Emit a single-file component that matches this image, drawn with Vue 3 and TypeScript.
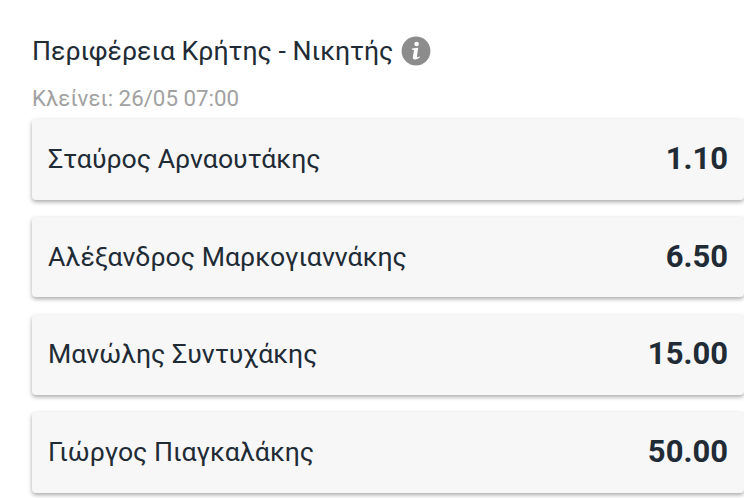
<script setup lang="ts">
interface Outcome { name: string; odds: string }
const outcomes: Outcome[] = [
  { name: 'Σταύρος Αρναουτάκης', odds: '1.10' },
  { name: 'Αλέξανδρος Μαρκογιαννάκης', odds: '6.50' },
  { name: 'Μανώλης Συντυχάκης', odds: '15.00' },
  { name: 'Γιώργος Πιαγκαλάκης', odds: '50.00' },
]
</script>

<template>
  <main class="market">
    <header class="head">
      <h1 class="title">Περιφέρεια Κρήτης - Νικητής</h1>
      <svg class="info" viewBox="0 0 30 30" aria-hidden="true">
        <circle cx="15" cy="15" r="14.4" fill="#8c8c8c" />
        <circle cx="15.6" cy="8" r="2.3" fill="#fff" />
        <path d="M11 12.4 L17.2 11.8 L15.9 20.4 Q15.8 22 18.8 20.3 L18.7 21.6 Q16.2 23.8 13.6 23.6 Q11.4 23.3 11.9 20.7 L13.1 14.2 L10.9 13.6 Z" fill="#fff" />
      </svg>
    </header>
    <p class="closes">Κλείνει: 26/05 07:00</p>
    <div class="list">
      <button v-for="o in outcomes" :key="o.name" class="row">
        <span class="name">{{ o.name }}</span>
        <span class="odds">{{ o.odds }}</span>
      </button>
    </div>
  </main>
</template>

<style>
body { background: #fff; overflow: hidden; }
</style>
<style scoped>
.market { box-sizing: border-box; height: 498px; overflow: hidden; padding: 34px 0 0 32px; font-family: Roboto, sans-serif; color: #212b35; }
.head { display: flex; align-items: center; gap: 8px; height: 34px; }
.title { margin: 0; font-size: 26.67px; line-height: 34px; font-weight: 400; white-space: nowrap; }
.info { flex: none; width: 30px; height: 30px; }
.closes { margin: 17px 0 0; font-size: 22.3px; line-height: 26px; color: #a1a1a1; height: 26px; }
.list { display: flex; flex-direction: column; gap: 17.2px; margin-top: 8px; }
.row { display: flex; align-items: center; justify-content: space-between; box-sizing: border-box; height: 80.6px; flex: none; padding: 0 16px 1px; border: 0; border-radius: 4px; background: #f7f7f7; box-shadow: 0 2px 4px rgba(0,0,0,.34); color: inherit; font-family: inherit; }
.name { font-size: 26.67px; }
.odds { padding-bottom: 1px; font-size: 31px; font-weight: 700; }
</style>
